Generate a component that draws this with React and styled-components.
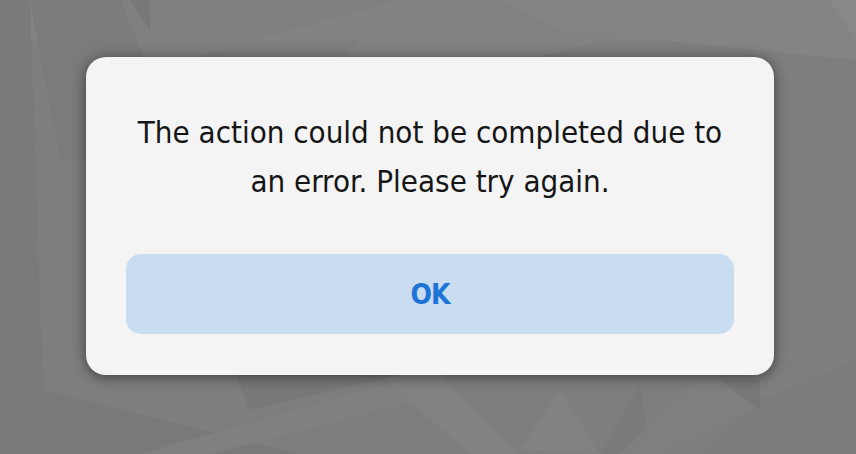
import React from 'react';
import styled, { createGlobalStyle } from 'styled-components';

const GlobalStyle = createGlobalStyle`
  html, body {
    margin: 0;
    padding: 0;
  }
  body {
    font-family: "DejaVu Sans Condensed", "DejaVu Sans", sans-serif;
    background: #7d7d7d;
  }
`;

const Screen = styled.div`
  position: relative;
  width: 856px;
  height: 454px;
  overflow: hidden;
  background: #7e7e7e;
`;

const Backdrop = styled.svg`
  position: absolute;
  inset: 0;
  width: 100%;
  height: 100%;
`;

const Layer = styled.div`
  position: relative;
  display: flex;
  justify-content: center;
  padding: 57px 0 0 4px;
`;

const Dialog = styled.div`
  width: 688px;
  height: 318px;
  box-sizing: border-box;
  padding: 51px 40px 40px;
  background: #f4f4f4;
  border-radius: 20px;
  box-shadow: 0 2px 14px rgba(0, 0, 0, 0.5);
  display: flex;
  flex-direction: column;
  gap: 48px;
`;

const Message = styled.p`
  margin: 0;
  text-align: center;
  font-size: 31px;
  line-height: 49px;
  color: #161616;
`;

const OkButton = styled.button`
  height: 80px;
  width: 100%;
  border: none;
  border-radius: 15px;
  background: #c9dcf0;
  color: #1b74d6;
  font-family: "DejaVu Sans Condensed", "DejaVu Sans", sans-serif;
  font-weight: bold;
  font-size: 28px;
  letter-spacing: -1px;
  cursor: pointer;
`;

function App() {
  return (
    <>
      <GlobalStyle />
      <Screen>
        <Backdrop viewBox="0 0 856 454" preserveAspectRatio="none">
          <polygon points="0,0 856,0 856,40 0,40" fill="#838383" />
          <polygon points="0,0 30,0 45,454 0,454" fill="#7a7a7a" />
          <polygon points="30,0 150,0 270,160 60,160" fill="#7b7b7b" />
          <polygon points="120,0 400,0 150,70" fill="#808080" />
          <polygon points="130,0 150,0 150,30" fill="#787878" />
          <polygon points="400,0 760,0 140,160 240,160" fill="#828282" />
          <polygon points="500,0 856,0 856,60 560,30" fill="#848484" />
          <polygon points="830,0 856,0 856,40" fill="#888888" />
          <polygon points="0,380 300,454 0,454" fill="#797979" />
          <polygon points="140,454 400,380 420,400 210,454" fill="#808080" />
          <polygon points="380,375 440,375 520,454 470,454" fill="#828282" />
          <polygon points="235,375 400,375 250,410" fill="#787878" />
          <polygon points="520,450 560,390 600,454" fill="#828282" />
          <polygon points="600,454 640,385 650,454" fill="#7a7a7a" />
          <polygon points="700,375 760,375 775,400 660,454 620,454" fill="#7f7f7f" />
          <polygon points="760,400 856,360 856,454 700,454" fill="#7c7c7c" />
          <polygon points="720,380 760,380 760,410" fill="#787878" />
        </Backdrop>
        <Layer>
          <Dialog>
            <Message>
              The action could not be completed due to
              <br />
              an error. Please try again.
            </Message>
            <OkButton type="button">OK</OkButton>
          </Dialog>
        </Layer>
      </Screen>
    </>
  );
}

export default App;
